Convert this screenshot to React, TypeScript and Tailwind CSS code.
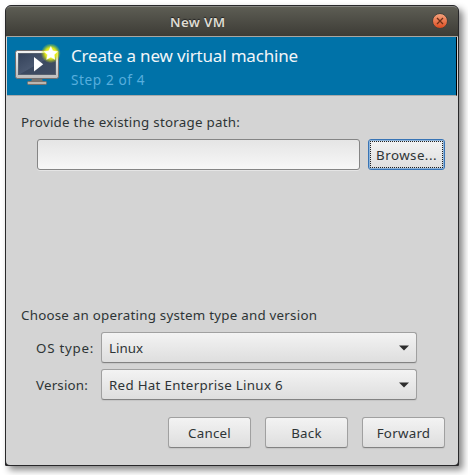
import type { ReactNode } from "react";

function MonitorIcon() {
  return (
    <svg width="50" height="46" viewBox="0 0 50 46" className="shrink-0">
      <defs>
        <linearGradient id="frame" x1="0" y1="0" x2="0" y2="1">
          <stop offset="0" stopColor="#f4f4f4" />
          <stop offset="1" stopColor="#bcbcbc" />
        </linearGradient>
        <linearGradient id="screen" x1="0" y1="0" x2="1" y2="1">
          <stop offset="0" stopColor="#34425a" />
          <stop offset="0.5" stopColor="#4a5870" />
          <stop offset="0.52" stopColor="#3c4a61" />
          <stop offset="1" stopColor="#414e64" />
        </linearGradient>
        <radialGradient id="glow">
          <stop offset="0" stopColor="#fff94a" />
          <stop offset="0.55" stopColor="#eaf00c" stopOpacity="0.95" />
          <stop offset="1" stopColor="#b8d820" stopOpacity="0" />
        </radialGradient>
      </defs>
      <path d="M18 34.500h10l1 3.500H17z" fill="#77736f" />
      <rect x="13.500" y="37.500" width="19" height="3" rx="1" fill="#bbb6b0" stroke="#77716c" />
      <rect x="1.500" y="6.500" width="43" height="28" rx="2" fill="url(#frame)" stroke="#716f70" />
      <rect x="4.500" y="9.500" width="37" height="21" fill="url(#screen)" stroke="#56606e" />
      <path d="M20 13v14.500l9.200-7.250z" fill="#fff" />
      <circle cx="36.800" cy="9.300" r="10" fill="url(#glow)" />
      <path d="m36.800 2.500 2.100 4.300 4.700.7-3.400 3.300.8 4.700-4.200-2.200-4.200 2.200.8-4.700L30 7.500l4.700-.7z" fill="#fff" stroke="#fffff0" strokeWidth=".4" />
    </svg>
  );
}

function Select({ value, spacing }: { value: string; spacing: string }) {
  return (
    <button className="flex h-[31px] w-[316px] items-center justify-between rounded-[3px] border border-[#a0a0a0] border-b-[#828282] bg-linear-to-b from-[#f3f3f3] to-[#dedede] pr-[7px] pl-[7px] shadow-[0_1px_1px_#c5c5c5]">
      <span className={spacing}>{value}</span>
      <svg width="10" height="6" viewBox="0 0 10 6">
        <path d="M0 .5h10L5 5.500z" fill="#2d2d2d" />
      </svg>
    </button>
  );
}

function Button({ children }: { children: ReactNode }) {
  return (
    <button className="h-[31px] w-[83px] rounded-[3px] border border-[#a0a0a0] border-b-[#828282] bg-linear-to-b from-[#f3f3f3] to-[#dedede] tracking-[0.25px] shadow-[0_1px_1px_#c5c5c5]">
      {children}
    </button>
  );
}

export default function App() {
  return (
    <div className="h-[475px] w-[468px] overflow-hidden bg-white pt-[5px] pl-[5px] font-['Noto_Sans',sans-serif] text-[13.333px] leading-5 text-[#2e3436]">
      <div className="flex h-[461px] w-[454px] flex-col rounded-t-[6px] rounded-b-[1px] border border-[#28282a] bg-[#28282a] shadow-[4px_4px_7px_0px_#0000007a]">
        <header className="flex h-[31px] shrink-0 items-center rounded-t-[5px] border-t border-b border-t-[#858580] border-b-[#a9a7a2] bg-linear-to-b from-[#5d5d54] to-[#3d3c36]">
          <h1 className="ml-[164px] flex-1 font-semibold tracking-[0.35px] text-[#dfdbd2] [text-shadow:0_-1px_1px_#222]">New VM</h1>
          <button className="mr-[10px] -mt-px flex h-4 w-4 items-center justify-center rounded-full border border-[#46423b] bg-linear-to-b from-[#f3a17b] to-[#dc4a1c]">
            <svg width="8" height="8" viewBox="0 0 8 8">
              <path d="m1 1 6 6M7 1 1 7" stroke="#6b2f18" strokeWidth="1.300" />
            </svg>
          </button>
        </header>
        <div className="shrink-0 bg-[#d4d4d4] px-px">
          <section className="flex h-[59px] border-r border-b border-r-black border-b-[#aaa] bg-[#0072a8] pt-[7px] pl-[7px]">
            <MonitorIcon />
            <div className="ml-[7px]">
              <h2 className="text-[17px] leading-6 tracking-[-0.17px] text-[#f1f5f8]">Create a new virtual machine</h2>
              <p className="mt-0.5 text-[13.600px] tracking-[0.6px] text-[#57aedd]">Step 2 of 4</p>
            </div>
          </section>
        </div>
        <main className="flex flex-1 flex-col rounded-b-[4px] bg-[#d4d4d4] pl-[15px]">
          <p className="mt-[16px] tracking-[0.26px]">Provide the existing storage path:</p>
          <div className="mt-[7px] ml-4 flex gap-2">
            <input className="h-[31px] w-[323px] rounded-[3px] border border-[#858585] bg-linear-to-b from-[#e5e5e5] to-[#f7f7f7] shadow-[0_1px_0_#e5e5e5] outline-none" />
            <button className="flex h-[31px] w-[77px] rounded-[3px] border border-[#3874b5] bg-linear-to-b from-[#f3f3f3] to-[#dedede] p-px shadow-[inset_0_0_1px_1px_#86afd8]">
              <span className="flex h-full w-full items-center justify-center border border-dotted border-[#222] tracking-[0.45px]">Browse...</span>
            </button>
          </div>
          <p className="mt-[135px] tracking-[0.24px]">Choose an operating system type and version</p>
          <div className="mt-[7px] ml-[15px] grid grid-cols-[65px_316px] items-center gap-y-[6px]">
            <label className="tracking-[0.75px]">OS type:</label>
            <Select value="Linux" spacing="tracking-normal" />
            <label className="tracking-[0.2px]">Version:</label>
            <Select value="Red Hat Enterprise Linux 6" spacing="tracking-[0.3px]" />
          </div>
          <footer className="mt-[17px] ml-[147px] flex gap-[14px]">
            <Button>Cancel</Button>
            <Button>Back</Button>
            <Button>Forward</Button>
          </footer>
        </main>
      </div>
    </div>
  );
}
